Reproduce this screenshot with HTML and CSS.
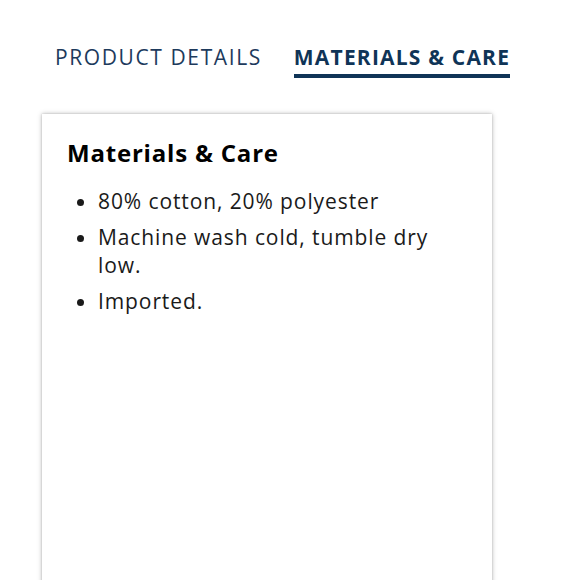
FILE: index.html
```html
<!DOCTYPE html>
<html>
<head>
<meta charset="utf-8">
<link rel="stylesheet" href="styles.css">
</head>
<body>
<div class="page">
  <nav class="tabs">
    <span class="tab">PRODUCT DETAILS</span>
    <span class="tab active">MATERIALS &amp; CARE</span>
  </nav>
  <section class="card">
    <h2 class="title">Materials &amp; Care</h2>
    <ul class="list">
      <li>80% cotton, 20% polyester</li>
      <li>Machine wash cold, tumble dry low.</li>
      <li>Imported.</li>
    </ul>
  </section>
</div>
</body>
</html>
```
FILE: styles.css
```css
html, body {
  margin: 0;
  padding: 0;
  background: #fff;
  height: 100%;
  overflow: hidden;
}
body {
  font-family: "Open Sans", "Noto Sans", sans-serif;
  color: #1a1a1a;
}
.page {
  padding-left: 42px;
  width: 452px;
}
.tabs {
  display: flex;
  gap: 32px;
  padding-top: 44px;
  padding-left: 13px;
}
.tab {
  font-size: 21px;
  line-height: 26px;
  color: #1d3a5c;
  letter-spacing: 1.6px;
  padding-bottom: 4px;
  border-bottom: 4px solid transparent;
  white-space: nowrap;
}
.tab.active {
  font-weight: 700;
  letter-spacing: 1.2px;
  color: #0f3457;
  border-bottom-color: #0f3457;
}
.card {
  margin-top: 36px;
  width: 450px;
  height: 520px;
  box-sizing: border-box;
  background: #fff;
  box-shadow: 0 0 5px rgba(0,0,0,0.25), 0 0 2px rgba(0,0,0,0.18);
  padding: 24px 25px;
}
.title {
  margin: 0;
  font-size: 24px;
  line-height: 30px;
  font-weight: 700;
  letter-spacing: 0.8px;
  color: #000;
}
.list {
  margin: 19px 0 0;
  padding-left: 31px;
  font-size: 21px;
  line-height: 28px;
  letter-spacing: 0.9px;
}
.list li {
  margin-bottom: 8px;
}
```
